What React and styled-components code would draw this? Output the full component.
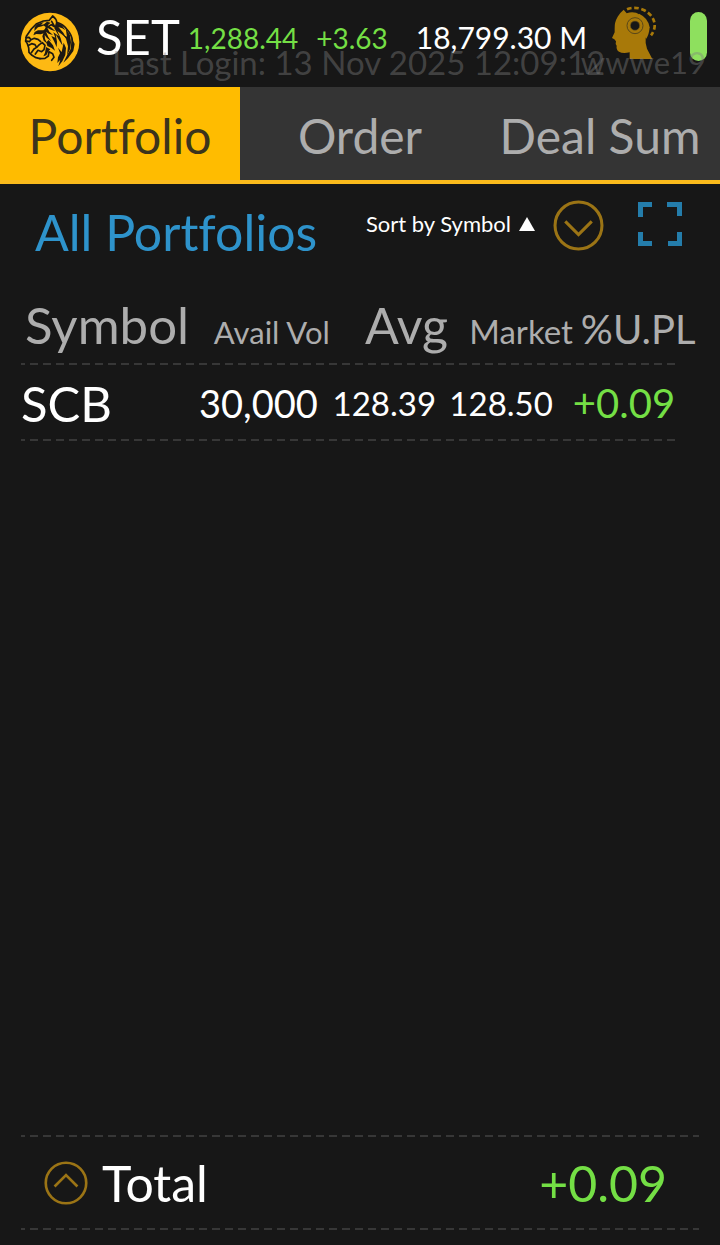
import React, { useState } from "react";
import styled, { createGlobalStyle } from "styled-components";

const GlobalStyle = createGlobalStyle`
  * {
    box-sizing: border-box;
  }

  body {
    margin: 0;
    background: #171717;
    color: #fff;
    font-family: Lato, "Liberation Sans", sans-serif;
    font-variant-ligatures: none;
  }

  button {
    padding: 0;
    border: none;
    background: none;
    color: inherit;
    font: inherit;
    cursor: pointer;
  }

  svg {
    display: block;
  }
`;

const Page = styled.div`
  display: flex;
  flex-direction: column;
  min-height: 100vh;
  overflow-x: hidden;
`;

const Header = styled.header`
  position: relative;
  display: flex;
  align-items: flex-start;
  height: 87px;
  padding: 6px 13px 0 20px;
  white-space: nowrap;
`;

const LogoButton = styled.button`
  margin: 6px 16px 0 0;
`;

const Quote = styled.div`
  display: flex;
  flex: 1;
  align-items: center;
  height: 64px;
`;

const Market = styled.span`
  padding-bottom: 4px;
  font-size: 49px;
`;

const Index = styled.span`
  margin-left: 8px;
  color: #74df45;
  font-size: 28px;
`;

const Change = styled(Index)`
  margin-left: 18px;
`;

const Turnover = styled.span`
  margin-left: 28px;
  padding-bottom: 2px;
  font-size: 30px;
`;

const HeadButton = styled.button`
  margin-right: 34px;
`;

const Battery = styled.span`
  width: 17px;
  height: 49px;
  margin-top: 6px;
  border-radius: 9px;
  background: #8ee05e;
`;

const Watermark = styled.div`
  position: absolute;
  top: 42px;
  left: 112px;
  right: 14px;
  height: 40px;
  color: rgba(128, 128, 128, 0.42);
  font-size: 33px;
  line-height: 40px;
  pointer-events: none;
`;

const WatermarkUser = styled.span`
  position: absolute;
  top: 0;
  right: 0;
  font-size: 31px;
`;

const Tabs = styled.nav`
  display: grid;
  grid-template-columns: repeat(3, 1fr);
  height: 97px;
`;

const Tab = styled.button`
  && {
    box-shadow: inset 0 -4px #fbbb1c;
    background: ${(props) => (props.$active ? "#ffbc00" : "#343434")};
    color: ${(props) => (props.$active ? "#3b341c" : "#adadad")};
    font-size: 48px;
    line-height: 60px;
    white-space: nowrap;
  }
`;

const Toolbar = styled.div`
  display: flex;
  align-items: flex-start;
  padding: 16px 38px 0 35px;
  white-space: nowrap;
`;

const Title = styled.h1`
  flex: 1;
  margin: 2px 0 0;
  color: #2e93cb;
  font-size: 50px;
  font-weight: 400;
  line-height: 60px;
`;

const SortButton = styled.button`
  && {
    display: flex;
    align-items: center;
    gap: 8px;
    margin: 10px 18px 0 0;
    font-size: 22px;
    line-height: 28px;
  }
`;

const ExpandButton = styled.button`
  margin: 2px 0 0 34px;
`;

const Holdings = styled.main`
  flex: 1;
  padding: 33px 42px 0 21px;
`;

const Table = styled.table`
  width: 100%;
  border-collapse: collapse;
  table-layout: fixed;
  white-space: nowrap;
`;

const dashes = `repeating-linear-gradient(
  90deg,
  #373737 0 4px,
  transparent 4px 9px,
  #373737 9px 13px
)`;

const Row = styled.tr`
  height: ${(props) => props.$height}px;
  background: ${dashes} left bottom / 100% 2px no-repeat;
`;

const Th = styled.th`
  width: ${(props) => props.$width}%;
  padding: 0 0 0 ${(props) => props.$indent || 0}px;
  color: #adadad;
  font-size: ${(props) => props.$size}px;
  font-weight: 400;
  line-height: 60px;
  text-align: ${(props) => props.$align || "right"};
  vertical-align: baseline;
`;

const Td = styled.td`
  padding: 0 ${(props) => props.$end || 0}px 0 0;
  color: ${(props) => (props.$up ? "#74df45" : "#fff")};
  font-size: ${(props) => props.$size}px;
  line-height: 60px;
  text-align: ${(props) => props.$align || "right"};
  vertical-align: middle;
`;

const Footer = styled.footer`
  padding: 0 21px 15px;
`;

const Total = styled.div`
  display: flex;
  align-items: center;
  height: 95px;
  padding: 0 32px 0 23px;
  background:
    ${dashes} left top / 100% 2px no-repeat,
    ${dashes} left bottom / 100% 2px no-repeat;
  font-size: 50px;
  line-height: 60px;
`;

const TotalLabel = styled.span`
  flex: 1;
  margin-left: 14px;
`;

const TotalValue = styled.span`
  color: #74df45;
`;

const holdings = [
  {
    symbol: "SCB",
    volume: "30,000",
    average: "128.39",
    market: "128.50",
    profit: "+0.09",
  },
];

const tabs = ["Portfolio", "Order", "Deal Sum"];

const TigerLogo = () => (
  <svg width="60" height="60" viewBox="24 21 180 180">
    <circle cx="114" cy="111" r="88" fill="#fdb913" />
    <g
      fill="none"
      stroke="#1c1913"
      strokeLinecap="round"
      strokeLinejoin="round"
      strokeWidth="5"
    >
      <path d="M41 108L43 94L58 72L74 56L94 48L112 46L122 33Q134 42 134 52Q154 58 164 72Q180 90 181 107" />
      <path d="M41 108L46 116L50 128L51 142L60 151L72 158L84 161" />
      <path d="M42 98L51 97L57 104L52 110L44 108M57 104L67 100L78 103L86 110" />
      <path d="M50 121L59 116L69 119L74 127L66 132L58 143" />
      <path d="M70 147L78 136L89 140L96 134L99 121L91 113L82 119L75 126" />
      <path d="M84 161L99 160L109 153L111 140L122 146L126 157L119 166" />
      <path d="M119 49L128 65L118 59L110 64" />
    </g>
    <g fill="#1c1913">
      <path d="M75 58L96 51L87 59L103 58L90 64L78 67L67 78L68 67Z" />
      <path d="M68 81L78 76L94 76L103 70L98 84L86 88L73 87L64 91Z" />
      <path d="M105 50L116 53L107 61L119 68L130 79L117 74L106 68L112 80L123 90L110 86L102 80L109 96L118 109L105 99L98 90L99 102L106 116L95 107L91 94L101 66L93 60Z" />
      <path d="M132 52L150 61L160 76L151 70L139 66L154 83L163 100L151 89L136 78L146 100L152 122L142 107L131 88L135 110L134 127L127 110L118 93L130 98L124 82L141 94L127 70Z" />
      <path d="M161 70L174 91L177 112L174 133L165 151L168 124L162 101L154 90L165 95Z" />
      <path d="M155 113L162 129L160 150L151 169L139 184L145 164L136 174L138 157L144 145L138 128L149 141Z" />
      <path d="M179 98L188 117L184 138L168 160L154 173L165 151L176 132Z" />
      <path d="M110 105L123 121L129 137L119 129L106 123L103 112Z" />
      <path d="M102 126L115 133L109 139L103 151L94 154L99 143Z" />
    </g>
  </svg>
);

const HeadIcon = () => (
  <svg width="45" height="54" viewBox="0 0 135 162" fill="none">
    <path
      d="M38 11L47 22Q68 14 87 26Q108 38 107 62Q109 77 104 94Q102 112 108 128L124 159H56V139Q35 144 24 137Q15 131 17 119L14 114L15 106L10 100L3 96L11 79V67Q10 49 20 32Q27 20 38 11Z"
      fill="#a87909"
    />
    <path d="M84 23Q112 36 116 64Q114 86 106 98L82 70Z" fill="#a87909" />
    <circle cx="72" cy="59" r="24" stroke="#594719" strokeWidth="3" />
    <circle cx="72" cy="59" r="14" fill="#171717" />
    <circle cx="72" cy="59" r="14" stroke="#765915" strokeWidth="2" />
    <path
      d="M48 10Q72 0 98 12Q128 27 131 55Q132 73 120 88"
      stroke="#a87909"
      strokeWidth="8"
      strokeDasharray="14 8"
    />
  </svg>
);

const CircleChevron = ({ size, up }) => (
  <svg
    width={size}
    height={size}
    viewBox="0 0 50 50"
    fill="none"
    stroke="#9b7415"
    strokeWidth="3"
  >
    <circle cx="25" cy="25" r="23" />
    <path d={up ? "M12 29L25 16L38 29" : "M12 21L25 34L38 21"} />
  </svg>
);

const ExpandIcon = () => (
  <svg
    width="44"
    height="44"
    viewBox="0 0 44 44"
    fill="none"
    stroke="#247dab"
    strokeWidth="5"
  >
    <path d="M2.5 15V2.5H14M29 2.5H41.5V14M2.5 30V41.5H14M30 41.5H41.5V30" />
  </svg>
);

const App = () => {
  const [activeTab, setActiveTab] = useState("Portfolio");
  const [ascending, setAscending] = useState(true);

  return (
    <Page>
      <GlobalStyle />
      <Header>
        <LogoButton aria-label="Home">
          <TigerLogo />
        </LogoButton>
        <Quote>
          <Market>SET</Market>
          <Index>1,288.44</Index>
          <Change>+3.63</Change>
          <Turnover>18,799.30 M</Turnover>
        </Quote>
        <HeadButton aria-label="Assistant">
          <HeadIcon />
        </HeadButton>
        <Battery />
        <Watermark>
          Last Login: 13 Nov 2025 12:09:12
          <WatermarkUser>wwwe19</WatermarkUser>
        </Watermark>
      </Header>
      <Tabs>
        {tabs.map((tab) => (
          <Tab
            key={tab}
            $active={tab === activeTab}
            onClick={() => setActiveTab(tab)}
          >
            {tab}
          </Tab>
        ))}
      </Tabs>
      <Toolbar>
        <Title>All Portfolios</Title>
        <SortButton onClick={() => setAscending(!ascending)}>
          Sort by Symbol
          <svg width="16" height="14" viewBox="0 0 16 14" fill="#fff">
            <path d={ascending ? "M8 0L16 14H0Z" : "M0 0H16L8 14Z"} />
          </svg>
        </SortButton>
        <button aria-label="More options">
          <CircleChevron size={51} />
        </button>
        <ExpandButton aria-label="Full screen">
          <ExpandIcon />
        </ExpandButton>
      </Toolbar>
      <Holdings>
        <Table>
          <thead>
            <Row $height={70}>
              <Th $width={26} $size={51} $indent={4} $align="left">
                Symbol
              </Th>
              <Th $width={21} $size={31}>
                Avail Vol
              </Th>
              <Th $width={18} $size={50}>
                Avg
              </Th>
              <Th $width={19} $size={33}>
                Market
              </Th>
              <Th $width={16} $size={40} $indent={8} $align="left">
                %U.PL
              </Th>
            </Row>
          </thead>
          <tbody>
            {holdings.map((item) => (
              <Row key={item.symbol} $height={76}>
                <Td $size={49} $align="left">
                  {item.symbol}
                </Td>
                <Td $size={38} $end={12}>
                  {item.volume}
                </Td>
                <Td $size={33} $end={12}>
                  {item.average}
                </Td>
                <Td $size={33} $end={20}>
                  {item.market}
                </Td>
                <Td $size={40} $end={8} $up>
                  {item.profit}
                </Td>
              </Row>
            ))}
          </tbody>
        </Table>
      </Holdings>
      <Footer>
        <Total>
          <button aria-label="Show total details">
            <CircleChevron size={44} up />
          </button>
          <TotalLabel>Total</TotalLabel>
          <TotalValue>+0.09</TotalValue>
        </Total>
      </Footer>
    </Page>
  );
};

export default App;
